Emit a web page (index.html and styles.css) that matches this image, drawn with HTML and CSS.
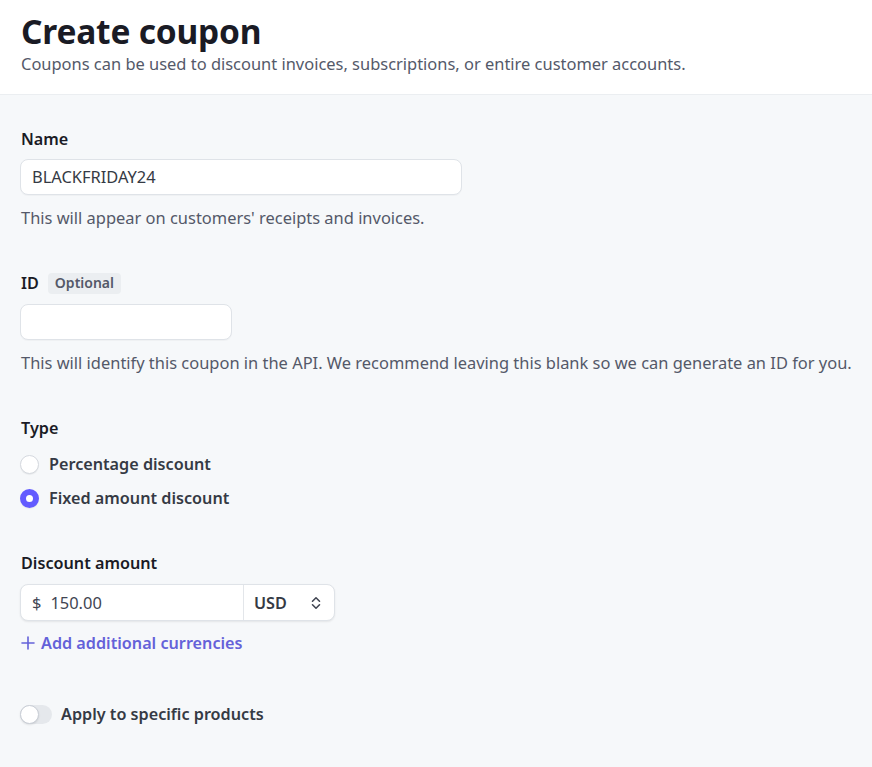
FILE: index.html
```html
<!DOCTYPE html>
<html lang="en">
<head>
<meta charset="utf-8">
<title>Create coupon</title>
<link rel="stylesheet" href="styles.css">
</head>
<body>
<header class="header">
  <h1 class="title">Create coupon</h1>
  <p class="subtitle">Coupons can be used to discount invoices, subscriptions, or entire customer accounts.</p>
</header>
<main class="main">
  <section class="field field-name">
    <div class="label">Name</div>
    <div class="input input-name"><span class="value">BLACKFRIDAY24</span></div>
    <p class="help">This will appear on customers' receipts and invoices.</p>
  </section>

  <section class="field">
    <div class="label label-row">ID <span class="badge">Optional</span></div>
    <div class="input input-id"></div>
    <p class="help">This will identify this coupon in the API. We recommend leaving this blank so we can generate an ID for you.</p>
  </section>

  <section class="field">
    <div class="label">Type</div>
    <div class="radios">
      <label class="radio"><span class="radio-dot"></span>Percentage discount</label>
      <label class="radio radio-2"><span class="radio-dot checked"></span>Fixed amount discount</label>
    </div>
  </section>

  <section class="field field-last">
    <div class="label">Discount amount</div>
    <div class="amount-group">
      <div class="amount"><span class="currency-sign">$</span><span class="value">150.00</span></div>
      <div class="currency"><span>USD</span>
        <svg class="chevrons" width="12" height="14" viewBox="0 0 12 14" fill="none" stroke="#414552" stroke-width="1.6" stroke-linecap="round" stroke-linejoin="round"><path d="M2.5 5.2 6 1.8l3.5 3.4"/><path d="M2.5 8.8 6 12.2l3.5-3.4"/></svg>
      </div>
    </div>
    <a class="add-link" href="#"><svg class="plus" width="14" height="14" viewBox="0 0 14 14" stroke="currentColor" stroke-width="1.6" stroke-linecap="round"><path d="M7 1v12M1 7h12"/></svg>Add additional currencies</a>
  </section>

  <section class="toggle-row">
    <span class="toggle"><span class="knob"></span></span>
    <span class="toggle-label">Apply to specific products</span>
  </section>
</main>
</body>
</html>
```

FILE: styles.css
```css
* { box-sizing: border-box; }
html, body { margin: 0; padding: 0; }
body {
  font-family: "Noto Sans", "Open Sans", sans-serif;
  font-size: 16.45px;
  line-height: 24px;
  color: #414552;
  background: #f6f8fa;
  min-height: 767px;
}
.header {
  background: #ffffff;
  padding: 10px 21px 18px;
  border-bottom: 1px solid #ebeef1;
}
.title {
  margin: 0;
  font-size: 33.5px;
  line-height: 42px;
  font-weight: 700;
  color: #1a1b25;
  letter-spacing: -0.2px;
}
.subtitle {
  margin: 0;
  color: #545969;
  line-height: 24px;
}
.main {
  padding: 32px 20px 40px 20px;
}
.field { margin-bottom: 41px; }
.field-last { margin-bottom: 0; }
.label {
  font-size: 16.2px;
  font-weight: 600;
  color: #1a1b25;
  padding-left: 1px;
}
.label-row {
  display: flex;
  align-items: center;
  gap: 9px;
}
.badge {
  display: inline-flex;
  align-items: center;
  height: 21px;
  padding: 0 7px;
  border-radius: 4px;
  background: #ebeef1;
  color: #545969;
  font-size: 14px;
  font-weight: 600;
}
.input {
  display: flex;
  align-items: center;
  height: 36px;
  margin-top: 8px;
  background: #ffffff;
  border: 1px solid #dfe3e8;
  border-radius: 8px;
  box-shadow: 0 1px 1px rgba(0,0,0,0.03);
  padding: 0 11px;
  color: #353a44;
}
.input-name { width: 442px; }
.input-id { width: 212px; margin-top: 9px; }
.help {
  margin: 11px 0 0;
  color: #545969;
  padding-left: 1px;
}
.radios {
  display: flex;
  flex-direction: column;
  gap: 10px;
  margin-top: 12px;
}
.radio {
  display: flex;
  align-items: center;
  gap: 10px;
  font-size: 16.2px;
  font-weight: 600;
  color: #353a44;
}
.radio-dot {
  width: 19px;
  height: 19px;
  border-radius: 50%;
  background: #ffffff;
  border: 1px solid #d5d9df;
  box-shadow: 0 1px 1px rgba(0,0,0,0.06);
}
.radio-dot.checked {
  border: 6px solid #635bff;
  background: #ffffff;
}
.amount-group {
  display: flex;
  width: 315px;
  height: 37px;
  margin-top: 9px;
  background: #ffffff;
  border: 1px solid #dfe3e8;
  border-radius: 8px;
  box-shadow: 0 1px 2px rgba(0,0,0,0.08);
}
.amount {
  flex: 1;
  display: flex;
  align-items: center;
  gap: 9px;
  padding-left: 11px;
  color: #414552;
}
.currency {
  width: 91px;
  display: flex;
  align-items: center;
  justify-content: space-between;
  padding: 0 12px 0 10px;
  border-left: 1px solid #e3e6ea;
  font-size: 16.2px;
  font-weight: 600;
  color: #353a44;
}
.add-link {
  display: inline-flex;
  align-items: center;
  gap: 6px;
  margin-top: 10px;
  color: #6461d9;
  font-size: 16.2px;
  font-weight: 600;
  text-decoration: none;
  padding-left: 1px;
}
.toggle-row {
  display: flex;
  align-items: center;
  gap: 9px;
  margin-top: 46px;
}
.toggle {
  position: relative;
  width: 32px;
  height: 19px;
  border-radius: 10px;
  background: #e5e8ec;
  display: inline-block;
}
.knob {
  position: absolute;
  left: 0;
  top: 0;
  width: 19px;
  height: 19px;
  border-radius: 50%;
  background: #ffffff;
  border: 1px solid #c9ced6;
  box-shadow: 0 1px 2px rgba(0,0,0,0.1);
}
.toggle-label {
  font-size: 16.2px;
  font-weight: 600;
  color: #353a44;
}
```
